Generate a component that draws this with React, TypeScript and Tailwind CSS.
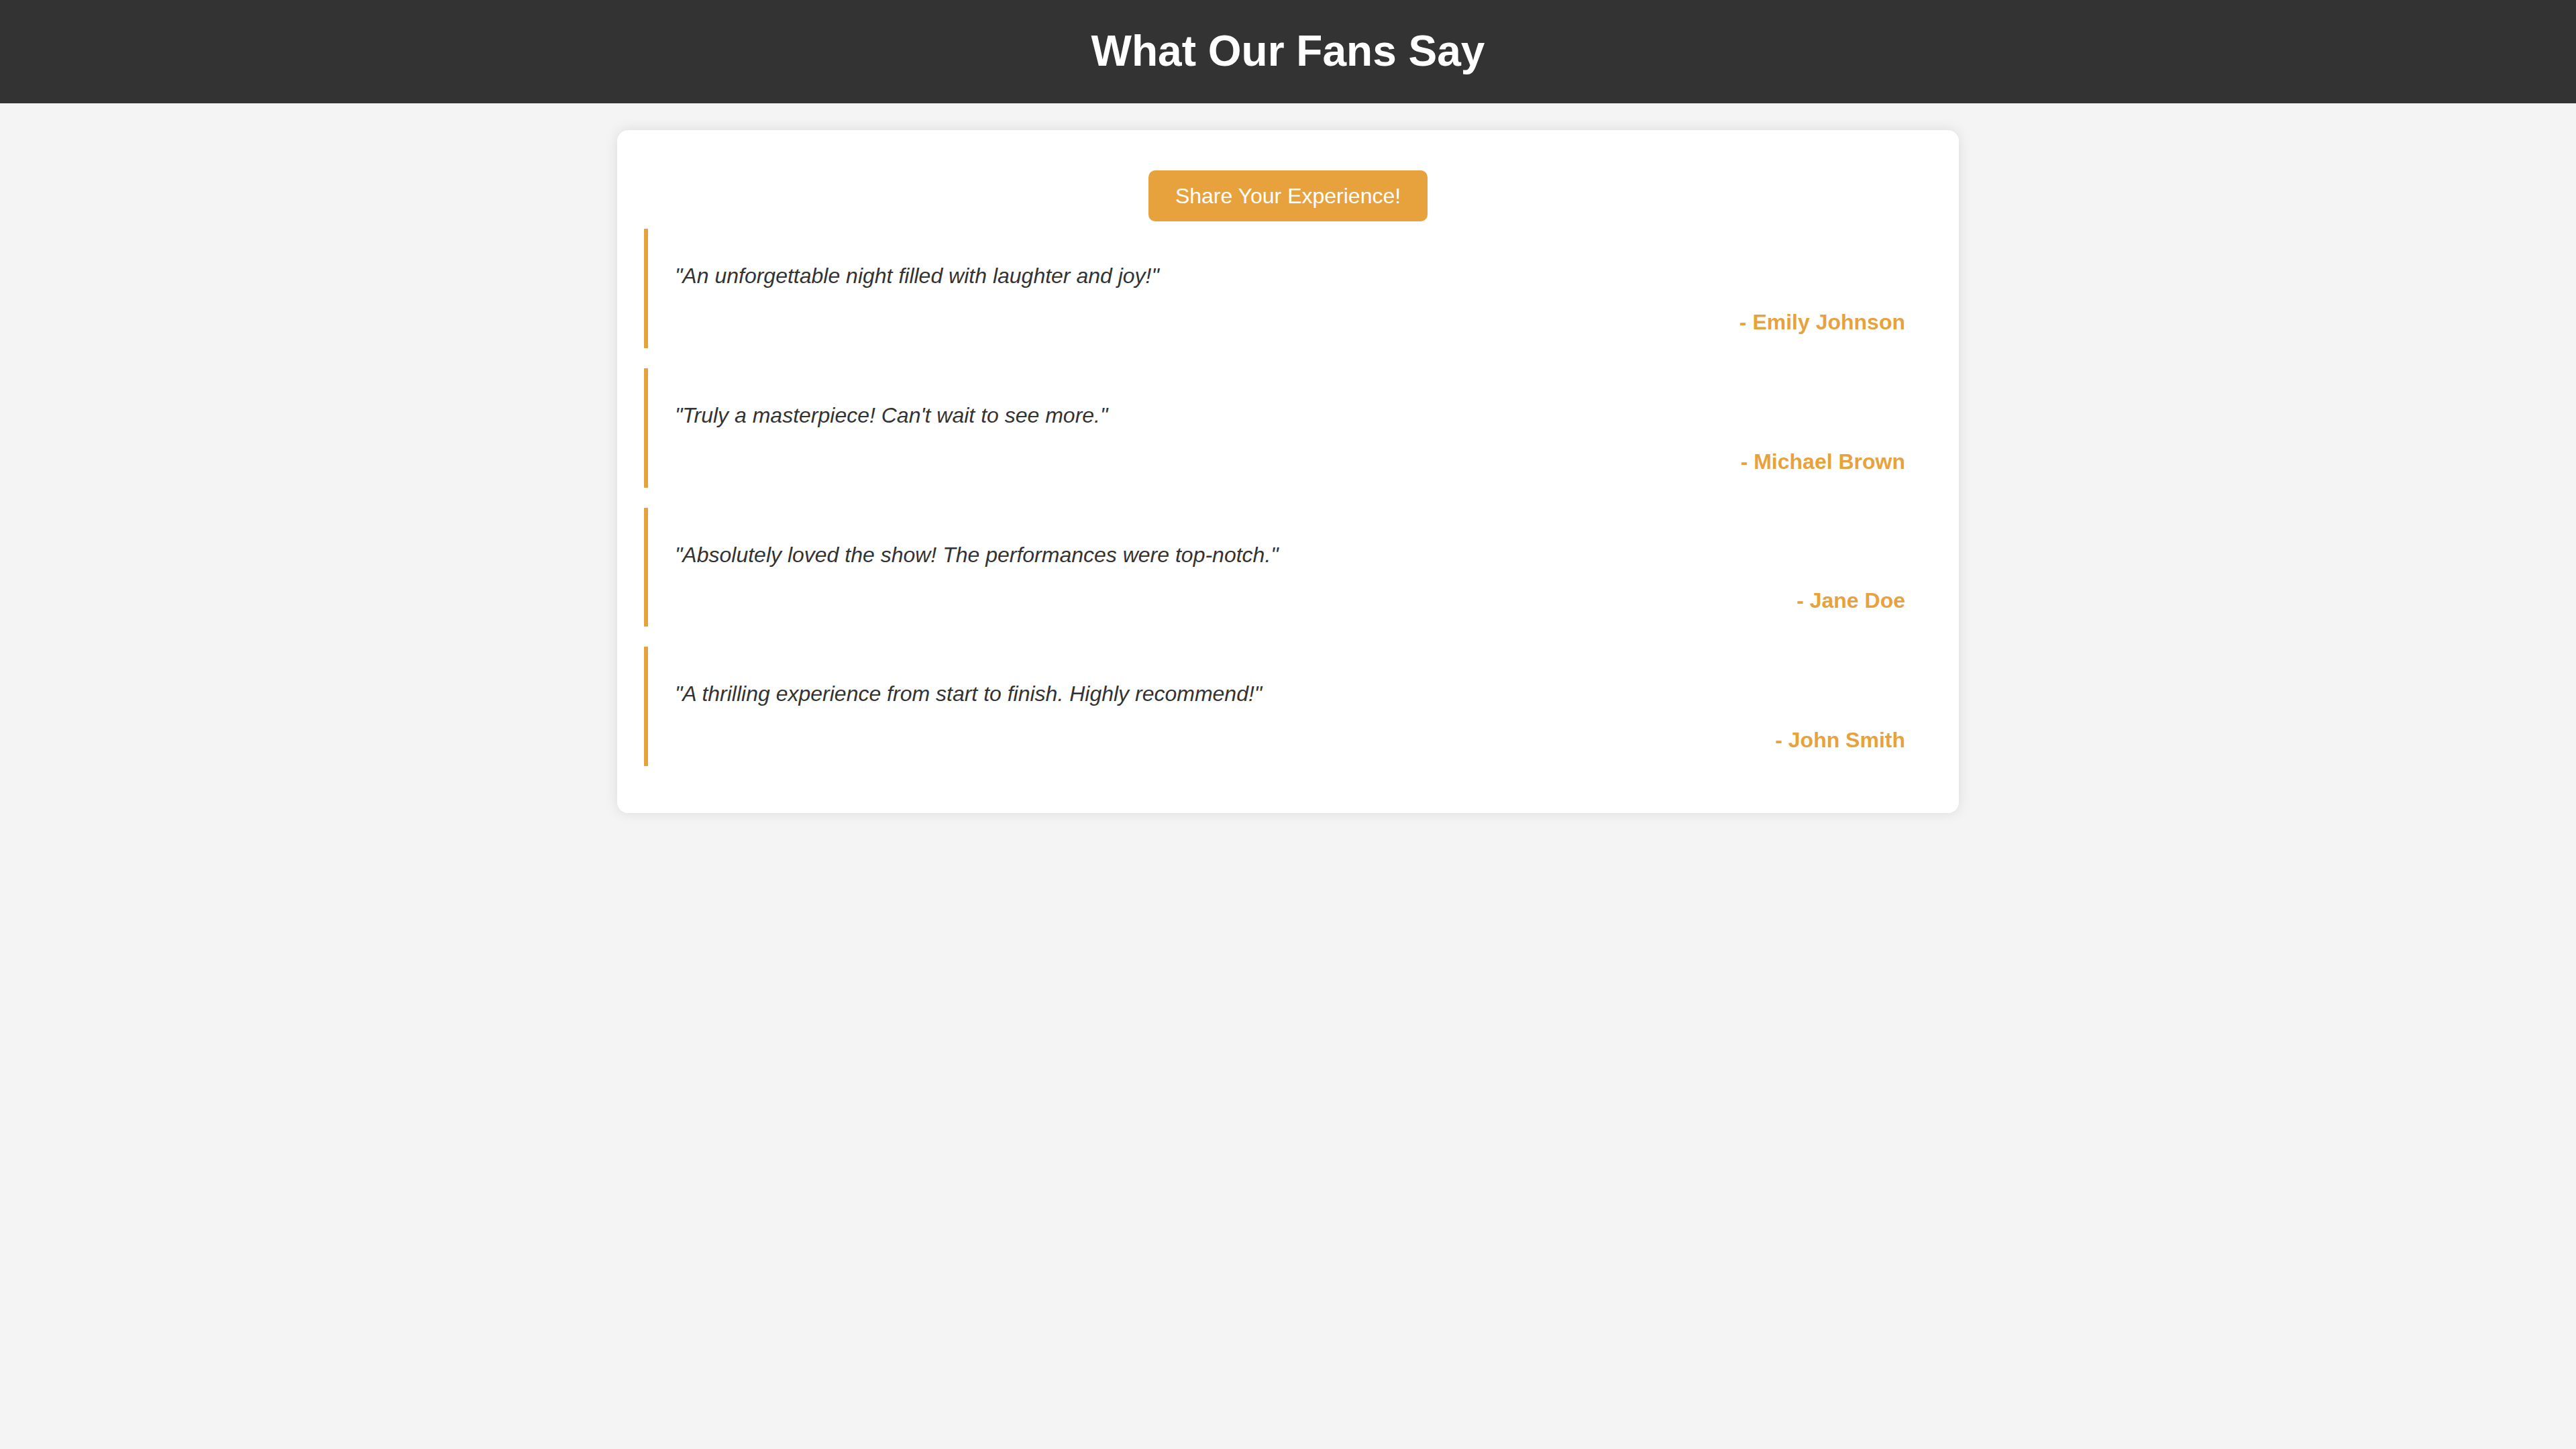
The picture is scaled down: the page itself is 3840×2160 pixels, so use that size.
const testimonials = [
  { quote: 'An unforgettable night filled with laughter and joy!', author: 'Emily Johnson' },
  { quote: "Truly a masterpiece! Can't wait to see more.", author: 'Michael Brown' },
  { quote: 'Absolutely loved the show! The performances were top-notch.', author: 'Jane Doe' },
  { quote: 'A thrilling experience from start to finish. Highly recommend!', author: 'John Smith' },
];

export default function App() {
  return (
    <div className="min-h-screen bg-[#f4f4f4] font-['Liberation_Sans',Arial,sans-serif] text-[#333]">
      {/* Header */}
      <header className="bg-[#333] py-[40px] text-center">
        <h1 className="text-[64px] font-bold leading-[1.15] text-white">What Our Fans Say</h1>
      </header>

      {/* Card */}
      <main className="mx-auto mt-[40px] w-[2000px] rounded-[16px] bg-white p-[40px] shadow-[0_0_20px_rgba(0,0,0,0.1)]">
        <div className="mt-[20px] mb-[11px] flex justify-center">
          <button className="rounded-[10px] bg-[#e8a23d] px-[40px] py-[20px] text-[32px] leading-[1.15] text-white">
            Share Your Experience!
          </button>
        </div>

        {testimonials.map(t => (
          <blockquote
            key={t.author}
            className="mb-[30px] border-l-[6px] border-[#e8a23d] px-[40px] py-[20px]"
          >
            <p className="my-[32px] text-[32px] italic leading-[1.15] text-[#333]">"{t.quote}"</p>
            <div className="text-right text-[32px] font-bold leading-[1.15] text-[#e8a23d]">
              - {t.author}
            </div>
          </blockquote>
        ))}
      </main>
    </div>
  );
}
